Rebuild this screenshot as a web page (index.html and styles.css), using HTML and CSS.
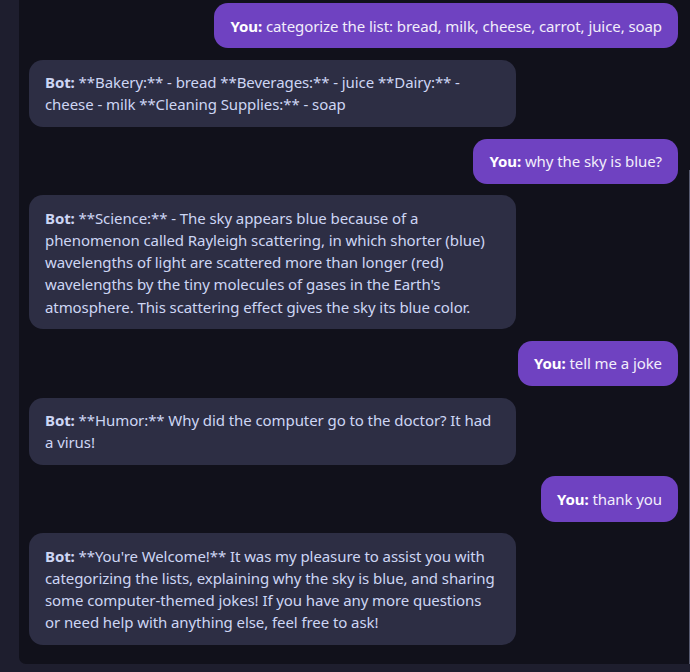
FILE: index.html
```
<!DOCTYPE html>
<html>
<head>
<meta charset="utf-8">
<link rel="stylesheet" href="styles.css">
</head>
<body>
<div class="app">
  <div class="chat">
    <div class="msg user"><b>You:</b> categorize the list: bread, milk, cheese, carrot, juice, soap</div>
    <div class="msg bot"><b>Bot:</b> **Bakery:** - bread **Beverages:** - juice **Dairy:** - cheese - milk **Cleaning Supplies:** - soap</div>
    <div class="msg user"><b>You:</b> why the sky is blue?</div>
    <div class="msg bot"><b>Bot:</b> **Science:** - The sky appears blue because of a phenomenon called Rayleigh scattering, in which shorter (blue) wavelengths of light are scattered more than longer (red) wavelengths by the tiny molecules of gases in the Earth's atmosphere. This scattering effect gives the sky its blue color.</div>
    <div class="msg user"><b>You:</b> tell me a joke</div>
    <div class="msg bot"><b>Bot:</b> **Humor:** Why did the computer go to the doctor? It had a virus!</div>
    <div class="msg user"><b>You:</b> thank you</div>
    <div class="msg bot"><b>Bot:</b> **You're Welcome!** It was my pleasure to assist you with categorizing the lists, explaining why the sky is blue, and sharing some computer-themed jokes! If you have any more questions or need help with anything else, feel free to ask!</div>
    <div class="thumb"></div>
  </div>
</div>
</body>
</html>
```
FILE: styles.css
```
html, body {
  margin: 0;
  padding: 0;
  background: #1e1e2e;
  height: 672px;
  overflow: hidden;
}
.app {
  padding-left: 19px;
  height: 664px;
}
.chat {
  position: relative;
  background: #11111b;
  height: 664px;
  box-sizing: border-box;
  padding: 3px 12px 19px 10px;
  border-bottom-left-radius: 7px;
  display: flex;
  flex-direction: column;
  gap: 11.5px;
  font-family: "Noto Sans", sans-serif;
  font-size: 15px;
  line-height: 22.2px;
  letter-spacing: -0.08px;
  color: #cdd6f4;
}
.msg {
  max-width: 75%;
  padding: 11.5px 16px;
  border-radius: 14px;
  box-sizing: border-box;
}
.msg b { font-weight: 700; }
.user {
  align-self: flex-end;
  background: #6f42c1;
  color: #f2eefb;
}
.user b { color: #ffffff; }
.bot {
  align-self: flex-start;
  background: #2d2e44;
}
.thumb {
  position: absolute;
  right: 0;
  top: 170px;
  bottom: 0;
  width: 1px;
  background: #585b70;
}
```
